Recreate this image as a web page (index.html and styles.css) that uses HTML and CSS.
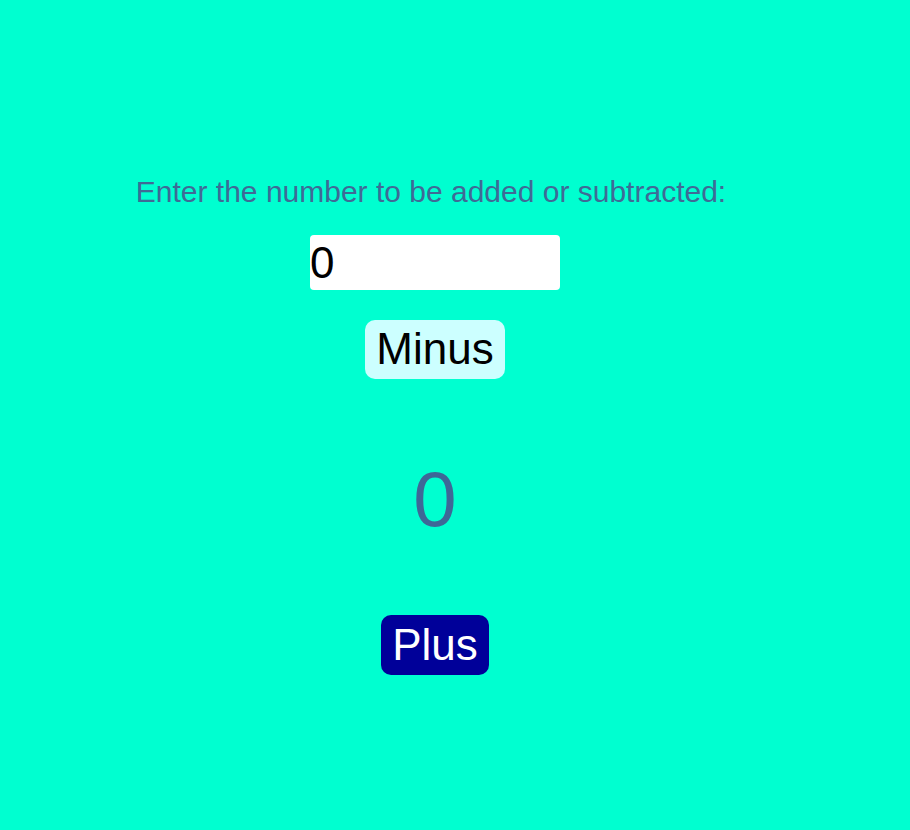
FILE: index.html
```html
<!DOCTYPE html>
<html>
<head>
<meta charset="utf-8">
<link rel="stylesheet" href="styles.css">
</head>
<body>
<div class="app">
  <p class="label">Enter the number to be added or subtracted:</p>
  <input class="num-input" type="text" value="0">
  <button class="btn btn-minus">Minus</button>
  <div class="counter">0</div>
  <button class="btn btn-plus">Plus</button>
</div>
</body>
</html>
```
FILE: styles.css
```css
html, body {
  margin: 0;
  padding: 0;
  background: #00ffd0;
  height: 100%;
}
body {
  font-family: "Liberation Sans", Arial, sans-serif;
}
.app {
  width: 870px;
  display: flex;
  flex-direction: column;
  align-items: center;
  padding-top: 175px;
}
.label {
  margin: 0 8px 0 0;
  font-size: 30px;
  line-height: 34px;
  color: #3f6a96;
}
.num-input {
  margin-top: 26px;
  width: 250px;
  height: 55px;
  box-sizing: border-box;
  border: none;
  border-radius: 4px;
  background: #fff;
  padding: 0;
  font-family: "Liberation Sans", Arial, sans-serif;
  font-size: 44px;
  color: #000;
  outline: none;
}
.btn {
  border: none;
  font-family: "Liberation Sans", Arial, sans-serif;
  font-size: 44px;
  line-height: 50px;
  border-radius: 10px;
  padding: 4px 11px 5px;
}
.btn-minus {
  margin-top: 30px;
  background: #ccffff;
  color: #000;
}
.counter {
  margin-top: 75px;
  font-size: 78px;
  line-height: 90px;
  color: #3e6797;
}
.btn-plus {
  margin-top: 71px;
  background: #000099;
  color: #fff;
  padding: 5px 11px 5px;
}
```
